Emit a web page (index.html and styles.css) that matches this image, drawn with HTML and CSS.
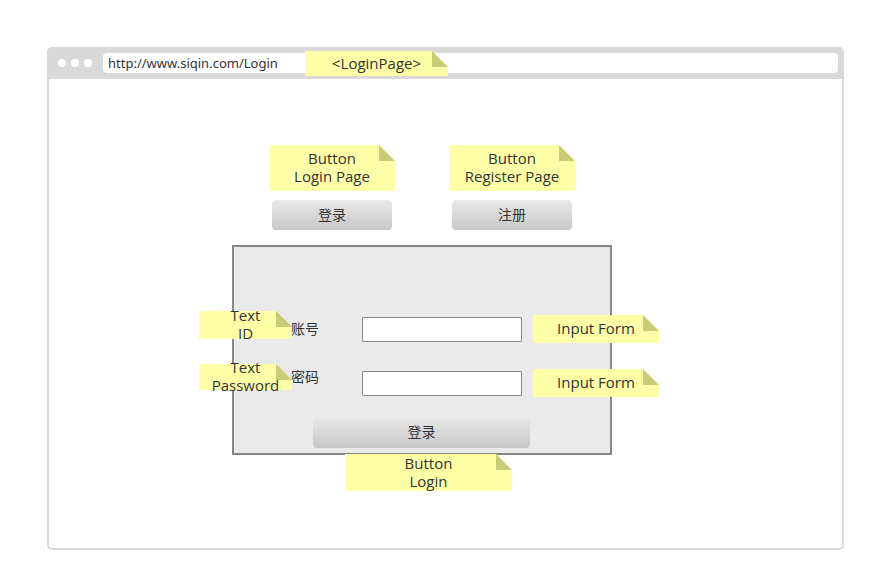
FILE: index.html
```html
<!DOCTYPE html>
<html lang="zh-CN">
<head>
<meta charset="utf-8">
<meta name="viewport" content="width=device-width, initial-scale=1">
<title>Login</title>
<link rel="stylesheet" href="styles.css">
</head>
<body>
<div class="window">
  <header class="bar">
    <span class="dot"></span><span class="dot"></span><span class="dot"></span>
    <div class="address">
      <input class="url" type="text" aria-label="URL" value="http://www.siqin.com/Login">
      <div class="note note-page">&lt;LoginPage&gt;</div>
    </div>
  </header>
  <main class="content">
    <nav class="tabs">
      <div class="anchor">
        <div class="note note-tab">Button<br>Login Page</div>
        <button class="button tab" type="button">登录</button>
      </div>
      <div class="anchor">
        <div class="note note-tab">Button<br>Register Page</div>
        <button class="button tab" type="button">注册</button>
      </div>
    </nav>
    <form class="panel">
      <div class="fields">
        <div class="labels">
          <div class="anchor">
            <div class="note note-id">Text<br>ID</div>
            <label for="account">账号</label>
          </div>
          <div class="anchor">
            <div class="note note-password">Text<br>Password</div>
            <label for="password">密码</label>
          </div>
        </div>
        <div class="inputs">
          <div class="anchor">
            <input class="field" id="account" type="text">
            <div class="note note-input">Input Form</div>
          </div>
          <div class="anchor">
            <input class="field" id="password" type="password">
            <div class="note note-input">Input Form</div>
          </div>
        </div>
      </div>
      <div class="anchor submit-row">
        <button class="button submit" type="button">登录</button>
        <div class="note note-submit">Button<br>Login</div>
      </div>
    </form>
  </main>
</div>
</body>
</html>
```
FILE: styles.css
```css
* {
  box-sizing: border-box;
}

body {
  display: flex;
  min-height: 100vh;
  margin: 0;
  padding: 47px 32px 31px 47px;
  background: #fff;
  color: #333;
  font: 14px/18px "Open Sans", "Noto Sans CJK SC", sans-serif;
}

.window {
  display: flex;
  flex: 1;
  flex-direction: column;
  border: 2px solid #d9d9d9;
  border-radius: 5px;
}

.bar {
  display: flex;
  align-items: center;
  gap: 5px;
  padding: 4px 4px 6px 9px;
  background: #d9d9d9;
}

.dot {
  width: 8px;
  height: 8px;
  border-radius: 50%;
  background: #fff;
}

.address {
  position: relative;
  flex: 1;
  display: flex;
  margin-left: 6px;
}

.url {
  width: 100%;
  height: 20px;
  padding: 0 5px;
  border: 0;
  border-radius: 4px;
  background: #fff;
  color: inherit;
  font: 13px/18px "Noto Sans", sans-serif;
}

.content {
  display: flex;
  flex-direction: column;
  align-items: center;
  gap: 15px;
  padding: 121px 47px 0 0;
}

.tabs {
  display: flex;
  gap: 60px;
}

.anchor {
  position: relative;
  display: flex;
}

.button {
  padding: 0;
  border: 0;
  border-radius: 4px;
  background: linear-gradient(#e9e9e9, #c7c7c7);
  color: inherit;
  font: inherit;
}

.tab {
  width: 120px;
  height: 30px;
}

.panel {
  width: 380px;
  padding: 70px 0 5px;
  border: 2px solid #878787;
  background: #eaeaea;
}

.fields {
  display: flex;
  padding-left: 57px;
}

.labels {
  display: flex;
  flex-direction: column;
  gap: 30px;
  width: 71px;
  padding-top: 3px;
}

.inputs {
  display: flex;
  flex-direction: column;
  gap: 29px;
}

.field {
  width: 160px;
  height: 25px;
  padding: 0 5px;
  border: 1px solid #878787;
  border-radius: 1px;
  background: #fff;
  color: inherit;
  font: inherit;
}

.submit-row {
  margin: 20px 80px 0 79px;
}

.submit {
  width: 100%;
  height: 32px;
}

/* Sticky-note annotations pinned over the controls they describe */
.note {
  position: absolute;
  z-index: 1;
  display: flex;
  align-items: center;
  justify-content: center;
  padding-bottom: 2px;
  font-size: 15px;
  text-align: center;
  white-space: nowrap;
}

.note::before {
  content: "";
  position: absolute;
  z-index: -1;
  inset: 0;
  background: #ffffa8;
  clip-path: polygon(0 0, calc(100% - 16px) 0, 100% 16px, 100% 100%, 0 100%);
}

.note::after {
  content: "";
  position: absolute;
  z-index: -1;
  top: 0;
  right: 0;
  width: 16px;
  height: 16px;
  background: #cccc77;
  clip-path: polygon(0 0, 100% 100%, 0 100%);
}

.note-page {
  top: -2px;
  left: 202px;
  width: 143px;
  height: 25px;
}

.note-tab {
  top: -55px;
  left: -3px;
  width: 126px;
  height: 46px;
}

.note-id,
.note-password {
  left: -92px;
  width: 93px;
}

.note-id {
  top: -9px;
  height: 28px;
}

.note-password {
  top: -4px;
  height: 26px;
}

.note-input {
  top: -2px;
  left: 171px;
  width: 126px;
  height: 28px;
}

.note-submit {
  top: 38px;
  left: 32px;
  width: 167px;
  height: 37px;
}
```
